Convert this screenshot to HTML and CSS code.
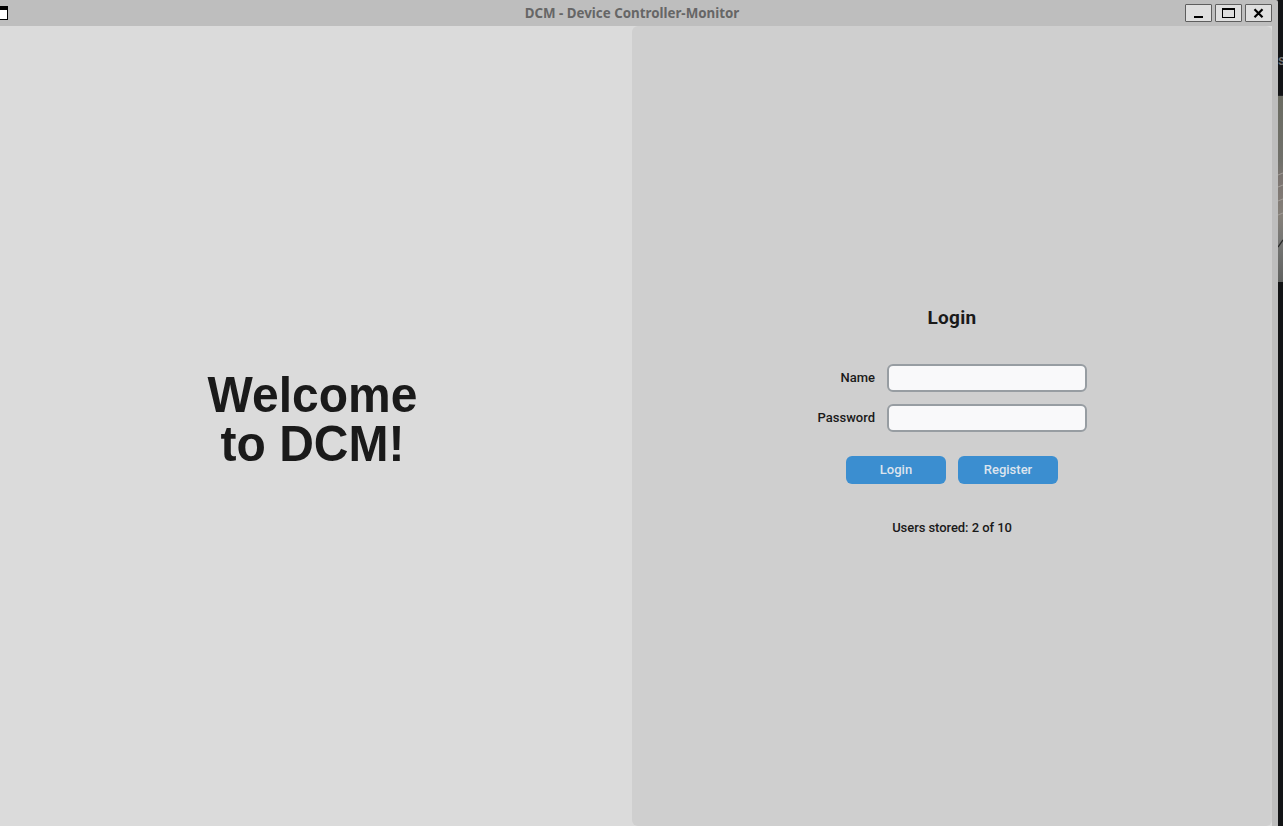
FILE: index.html
```html
<!DOCTYPE html>
<html lang="en">
<head>
<meta charset="utf-8">
<title>DCM - Device Controller-Monitor</title>
<link rel="stylesheet" href="styles.css">
</head>
<body>
<div class="window">
  <header class="titlebar">
    <span class="window-menu"></span>
    <span class="title">DCM - Device Controller-Monitor</span>
    <div class="controls">
      <svg class="control" viewBox="1 1 25 16"><path d="M9 12h9v2H9z" fill="#000"/></svg>
      <svg class="control" viewBox="1 1 25 16"><path d="M7 4h13v10H7zM8 6v7h11V6z" fill="#000" fill-rule="evenodd"/></svg>
      <svg class="control" viewBox="1 1 25 16"><path d="M9.5 5.2l8 8M17.5 5.2l-8 8" stroke="#000" stroke-width="2.2"/></svg>
    </div>
  </header>
  <div class="content">
    <section class="welcome"><h1>Welcome<br>to DCM!</h1></section>
    <main class="panel">
      <h2>Login</h2>
      <form class="fields">
        <label for="name">Name</label><input id="name" type="text">
        <label for="password">Password</label><input id="password" type="password">
      </form>
      <div class="actions"><button>Login</button><button>Register</button></div>
      <p class="status">Users stored: 2 of 10</p>
    </main>
  </div>
</div>
<aside class="desktop">
  <div class="behind"><span>s</span></div>
  <svg class="photo" viewBox="0 0 5 186" preserveAspectRatio="none"><path d="M0 151l5-7" stroke="#292a29" stroke-width="1.3"/><path d="M0 79l5-2M0 91l5-2M0 105l5-2M0 119l5-2" stroke="#a29d98"/></svg>
</aside>
</body>
</html>
```
FILE: styles.css
```css
* { box-sizing: border-box; }
body {
  margin: 0;
  height: 826px;
  display: flex;
  overflow: hidden;
  background: #121315;
  color: #1a1a1a;
  font: 500 13px/16px Roboto, sans-serif;
}
.window { width: 1278px; height: 826px; background: #bebebe; border-top-right-radius: 2px; }
.titlebar { height: 26px; display: grid; grid-template-columns: 93px 1fr 93px; align-items: center; padding-right: 6px; }
.window-menu { width: 8px; height: 14px; border: 1px solid #000; border-top-width: 4px; border-left: 0; background: #fff; }
.title { text-align: center; color: #666; font: bold 13.33px/18px "Noto Sans", sans-serif; padding-right: 8px; }
.controls { display: flex; gap: 3px; justify-content: flex-end; }
.control { width: 27px; height: 18px; background: #dfdfdf; border: 1px solid #5e5e5e; border-radius: 1px; }
.content { display: flex; width: 1272px; height: 800px; background: #dbdbdb; }
.welcome { width: 632px; display: flex; justify-content: center; padding: 348px 7px 0 0; }
h1 { margin: 0; height: 98px; text-align: center; font: bold 48px/46px "Liberation Sans", Arial, sans-serif; transform: scaleY(1.06); }
.panel { width: 640px; border-radius: 6px; background: #cfcfcf; display: flex; flex-direction: column; align-items: center; padding-top: 280px; }
h2 { margin: 0; font: bold 19px/24px Roboto, sans-serif; letter-spacing: 0.3px; }
.fields { display: grid; grid-template-columns: 58px 200px; gap: 12px; margin-top: 34px; align-items: center; text-align: right; }
.fields label { white-space: nowrap; }
.fields input { width: 200px; height: 28px; border: 2px solid #979da2; border-radius: 6px; background: #f9f9fa; }
.actions { display: flex; gap: 12px; margin-top: 24px; }
.actions button { width: 100px; height: 28px; padding: 0; border: 0; border-radius: 6px; background: #3b8ed0; color: #dce4ee; font: 500 13px/16px Roboto, sans-serif; }
.status { margin: 36px 0 0; letter-spacing: -0.06px; }
.desktop { width: 5px; overflow: hidden; }
.behind { height: 96px; padding-top: 50px; border-bottom: 1px solid #202124; color: #777; font-size: 14px; line-height: 20px; }
.photo { display: block; width: 5px; height: 186px; background: linear-gradient(#6b6c62, #70706a 35%, #7c7571 45%, #858079 65%, #777775 77%, #606260); }
```
